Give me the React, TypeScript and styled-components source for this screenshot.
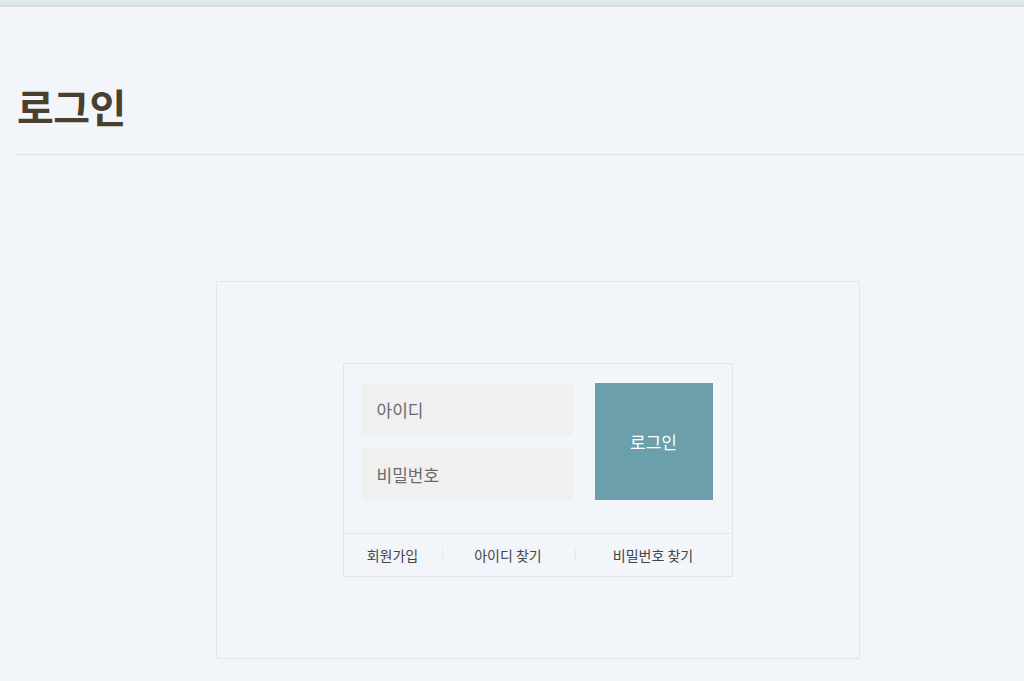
import styled, { createGlobalStyle } from "styled-components";

const GlobalStyle = createGlobalStyle`
  html, body {
    margin: 0;
    padding: 0;
    background-color: #f2f5f9;
    overflow-x: hidden;
  }
  body {
    font-family: "Noto Sans CJK KR", "Noto Sans", sans-serif;
  }
  * {
    box-sizing: border-box;
  }
`;

const TopBar = styled.div`
  height: 7px;
  background: linear-gradient(to bottom, #e4ecee 0, #dde7ea 1px, #dde7ea 5px, #d3dde2 6px);
`;

const Page = styled.div`
  width: 1041px;
  margin-left: 17px;
`;

const PageHeader = styled.div`
  height: 148px;
  padding-top: 70px;
  border-bottom: 1px solid #dde2e7;
`;

const Title = styled.h1`
  margin: 0;
  font-size: 40px;
  line-height: 58px;
  font-weight: 700;
  color: #4a4030;
  letter-spacing: -0.5px;
`;

const Content = styled.div`
  padding-top: 126px;
  padding-bottom: 40px;
`;

const OuterBox = styled.div`
  width: 644px;
  margin: 0 auto;
  padding: 81px 0;
  border: 1px solid #e2e6ea;
`;

const LoginBox = styled.div`
  width: 390px;
  margin: 0 auto;
  border: 1px solid #e2e6ea;
`;

const FormArea = styled.form`
  display: flex;
  gap: 22px;
  padding: 19px 19px 33px 18px;
`;

const Fields = styled.div`
  display: flex;
  flex-direction: column;
  gap: 13px;
  width: 211px;
`;

const Field = styled.input`
  height: 52px;
  border: none;
  outline: none;
  background-color: #f0f0f0;
  padding: 0 15px;
  font-family: inherit;
  font-size: 17px;
  color: #444;
  &::placeholder {
    color: #6a6a6a;
  }
`;

const SubmitButton = styled.button`
  width: 118px;
  height: 117px;
  border: none;
  background-color: #6a9fab;
  color: #ffffff;
  font-family: inherit;
  font-size: 17px;
  cursor: pointer;
`;

const Links = styled.div`
  display: grid;
  grid-template-columns: 98px 133px 1fr;
  align-items: center;
  height: 43px;
  border-top: 1px solid #e2e6ea;
`;

const LinkItem = styled.a<{ $divider?: boolean }>`
  position: relative;
  text-align: center;
  font-size: 14px;
  color: #444;
  text-decoration: none;
  cursor: pointer;
  &::before {
    content: "";
    display: ${(p) => (p.$divider ? "block" : "none")};
    position: absolute;
    left: 0;
    top: 50%;
    width: 1px;
    height: 14px;
    margin-top: -7px;
    background-color: #e6e8ea;
  }
`;

const App = () => {
  return (
    <>
      <GlobalStyle />
      <TopBar />
      <Page>
        <PageHeader>
          <Title>로그인</Title>
        </PageHeader>
        <Content>
          <OuterBox>
            <LoginBox>
              <FormArea onSubmit={(e) => e.preventDefault()}>
                <Fields>
                  <Field type="text" placeholder="아이디" />
                  <Field type="password" placeholder="비밀번호" />
                </Fields>
                <SubmitButton type="submit">로그인</SubmitButton>
              </FormArea>
              <Links>
                <LinkItem>회원가입</LinkItem>
                <LinkItem $divider>아이디 찾기</LinkItem>
                <LinkItem $divider>비밀번호 찾기</LinkItem>
              </Links>
            </LoginBox>
          </OuterBox>
        </Content>
      </Page>
    </>
  );
};

export default App;
